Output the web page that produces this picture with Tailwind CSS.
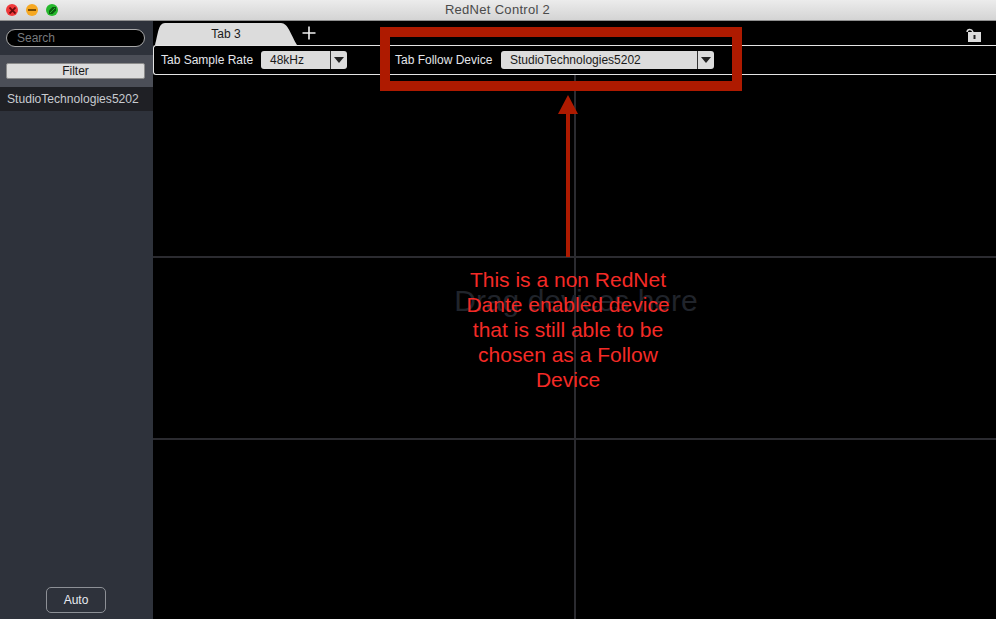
<!DOCTYPE html>
<html lang="en">
<head>
  <meta charset="UTF-8" />
  <title>RedNet Control 2</title>
  <script src="https://cdn.jsdelivr.net/npm/@tailwindcss/browser@4"></script>
</head>
<body class="h-[619px] w-[996px] overflow-hidden bg-black font-['Liberation_Sans',Arial,sans-serif] relative">

  <!-- Title bar -->
  <div class="h-[21px] relative flex items-center justify-center bg-gradient-to-b from-[#ececec] to-[#d4d4d4] border-b border-[#8f8f8f]">
    <div class="absolute left-[6px] top-[4px] flex gap-[8px]">
      <div class="w-3 h-3 rounded-full bg-[#f0383a] flex items-center justify-center">
        <svg width="7" height="7" viewBox="0 0 7 7"><path d="M0.5 0.5L6.5 6.5M6.5 0.5L0.5 6.5" stroke="#6a0a0a" stroke-width="1.8"/></svg>
      </div>
      <div class="w-3 h-3 rounded-full bg-[#f6a821] flex items-center justify-center">
        <div class="w-[8px] h-[2px] bg-[#7a4e06]"></div>
      </div>
      <div class="w-3 h-3 rounded-full bg-[#25b82c] flex items-center justify-center">
        <svg width="9" height="9" viewBox="0 0 9 9"><path d="M1 4.5L4.5 1H8V4.5L4.5 8H1Z" fill="#0b5c10"/><path d="M2 7L7 2" stroke="#25b82c" stroke-width="1"/></svg>
      </div>
    </div>
    <span class="text-[13px] text-[#4a4a4a] tracking-[0.3px] -ml-[1px]">RedNet Control 2</span>
  </div>

  <div class="flex h-[598px]">
    <!-- Sidebar -->
    <div class="w-[153px] shrink-0 bg-[#2e323b] flex flex-col">
      <div class="h-[34px] pl-[6px] pr-[8px] pt-[8px]">
        <div class="h-[18px] rounded-full bg-black border border-[#a8a8a8] px-[10px] flex items-center text-[12px] text-[#77797d]">Search</div>
      </div>
      <div class="h-[32px] bg-[#4b4e57] pl-[6px] pr-[8px] pt-[8px]">
        <div class="h-[16px] bg-[#dcdcdc] border border-[#8c8c8c] rounded-[2px] flex items-center justify-center text-[12px] text-[#1a1a1a]">Filter</div>
      </div>
      <div class="h-[24px] bg-[#1f2025] px-[7px] flex items-center text-[12.1px] text-[#c8cbd0]">StudioTechnologies5202</div>
      <div class="flex-1"></div>
      <div class="flex justify-center pb-[6px] pr-px">
        <div class="w-[60px] h-[26px] rounded-[5px] border border-[#8d9096] flex items-center justify-center text-[12px] font-medium text-[#e8eaf0]">Auto</div>
      </div>
    </div>

    <!-- Main -->
    <div class="flex-1 flex flex-col min-w-0">
      <!-- Tab strip -->
      <div class="h-[24px] flex items-end relative">
        <div class="ml-[2px] w-[142px] h-[22px] relative flex items-center justify-center text-[12px] text-[#1a1a1a]">
          <svg class="absolute inset-0" width="142" height="22" viewBox="0 0 142 22"><path d="M0 22C3 12 3 0 10 0H126C133 0 136 12 142 22Z" fill="#dcdcdc"/></svg>
          <span class="relative">Tab 3</span>
        </div>
        <svg class="ml-[4px] mb-[4px]" width="16" height="16" viewBox="0 0 16 16"><path d="M8 1.5V14.5M1.5 8H14.5" stroke="#f0f0f0" stroke-width="1.6"/></svg>
        <svg class="absolute right-[15px] top-[6px]" width="15" height="16" viewBox="0 0 15 16">
          <path d="M1 5C1.5 2 5.5 1.5 7 5" fill="none" stroke="#dcdcdc" stroke-width="1.5"/>
          <rect x="2" y="5" width="13" height="10" fill="#dcdcdc"/>
          <rect x="7.5" y="8" width="2" height="4" fill="#222"/>
        </svg>
      </div>

      <!-- Toolbar -->
      <div class="h-[30px] shrink-0 border-y border-[#e4e4e4] border-l rounded-l-[3px] flex items-center text-[12px] font-medium text-[#e4e6ea]">
        <span class="ml-[7px] w-[100px]">Tab Sample Rate</span>
        <div class="w-[86px] h-[18px] bg-[#dcdcdc] rounded-[3px] flex items-center justify-between pl-[9px] text-[#1a1a1a] font-normal">
          <span>48kHz</span>
          <div class="w-[17px] h-full border-l border-[#333] flex items-center justify-center">
            <div class="w-0 h-0 border-x-[5px] border-x-transparent border-t-[6px] border-t-[#222]"></div>
          </div>
        </div>
        <span class="ml-[48px] w-[106px]">Tab Follow Device</span>
        <div class="w-[213px] h-[18px] bg-[#dcdcdc] rounded-[3px] flex items-center justify-between pl-[9px] text-[#1a1a1a] font-normal">
          <span>StudioTechnologies5202</span>
          <div class="w-[17px] h-full border-l border-[#333] flex items-center justify-center">
            <div class="w-0 h-0 border-x-[5px] border-x-transparent border-t-[6px] border-t-[#222]"></div>
          </div>
        </div>
      </div>

      <!-- Drop canvas -->
      <div class="flex-1 relative grid grid-cols-[423px_1fr] grid-rows-[183px_182px_1fr]">
        <div class="border-r-2 border-b-2 border-[#2b2b30]"></div>
        <div class="border-b-2 border-[#2b2b30]"></div>
        <div class="border-r-2 border-b-2 border-[#2b2b30]"></div>
        <div class="border-b-2 border-[#2b2b30]"></div>
        <div class="border-r-2 border-[#2b2b30]"></div>
        <div></div>
        <div class="absolute left-0 w-[846px] top-[210px] text-center text-[30px] leading-[32px] text-[#20242b]">Drag devices here</div>
      </div>
    </div>
  </div>

  <!-- Annotations -->
  <div class="absolute left-[380px] top-[27px] w-[362px] h-[64px] border-[10px] border-[#ae1a00]"></div>
  <svg class="absolute left-[556px] top-[94px]" width="24" height="164" viewBox="0 0 24 164">
    <path d="M12 1L22 20H14V163H10V20H2Z" fill="#ae1a00"/>
  </svg>
  <div class="absolute left-[453px] top-[267px] w-[230px] text-center text-[21px] leading-[25px] text-[#f42a26]">This is a non RedNet Dante enabled device that is still able to be chosen as a Follow Device</div>
</body>
</html>
